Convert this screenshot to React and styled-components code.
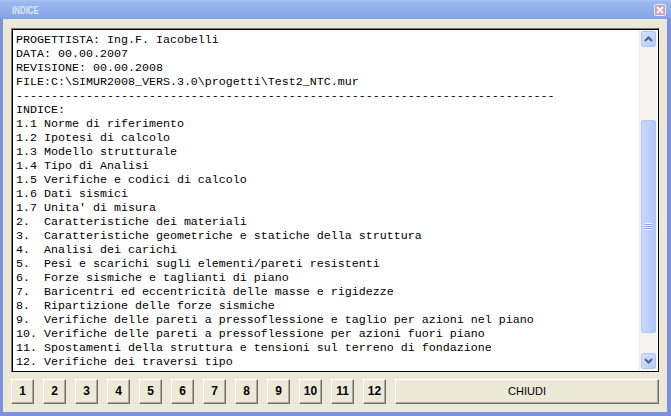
import React from 'react';
import styled, { createGlobalStyle } from 'styled-components';

const GlobalStyle = createGlobalStyle`
    html, body {
        margin: 0;
        padding: 0;
        background: #ece9d8;
    }
    #root {
        width: 671px;
        height: 416px;
    }
`;

const LINES = [
    'PROGETTISTA: Ing.F. Iacobelli',
    'DATA: 00.00.2007',
    'REVISIONE: 00.00.2008',
    'FILE:C:\\SIMUR2008_VERS.3.0\\progetti\\Test2_NTC.mur',
    '-'.repeat(77),
    'INDICE:',
    '1.1 Norme di riferimento',
    '1.2 Ipotesi di calcolo',
    '1.3 Modello strutturale',
    '1.4 Tipo di Analisi',
    '1.5 Verifiche e codici di calcolo',
    '1.6 Dati sismici',
    "1.7 Unita' di misura",
    '2.  Caratteristiche dei materiali',
    '3.  Caratteristiche geometriche e statiche della struttura',
    '4.  Analisi dei carichi',
    '5.  Pesi e scarichi sugli elementi/pareti resistenti',
    '6.  Forze sismiche e taglianti di piano',
    '7.  Baricentri ed eccentricità delle masse e rigidezze',
    '8.  Ripartizione delle forze sismiche',
    '9.  Verifiche delle pareti a pressoflessione e taglio per azioni nel piano',
    '10. Verifiche delle pareti a pressoflessione per azioni fuori piano',
    '11. Spostamenti della struttura e tensioni sul terreno di fondazione',
    '12. Verifiche dei traversi tipo',
];

const SECTIONS = ['1', '2', '3', '4', '5', '6', '7', '8', '9', '10', '11', '12'];

function Chevron({ up }) {
    return (
        <svg width="9" height="6" viewBox="0 0 9 6">
            <path
                d={up ? 'M1 5 L4.5 1.5 L8 5' : 'M1 1 L4.5 4.5 L8 1'}
                fill="none"
                stroke="#4d6185"
                strokeWidth="2"
            />
        </svg>
    );
}

function App() {
    return (
        <Window>
            <GlobalStyle />
            <TitleBar>
                <Title>INDICE</Title>
                <CloseButton>
                    <svg width="8" height="8" viewBox="0 0 8 8">
                        <path d="M1 1 L7 7 M7 1 L1 7" stroke="#fff" strokeWidth="1.8" />
                    </svg>
                </CloseButton>
            </TitleBar>

            <Frame>
                <TextBox>
                    <TextContent>{LINES.join('\n')}</TextContent>
                    <ScrollBar>
                        <ArrowButton><Chevron up /></ArrowButton>
                        <Track>
                            <Thumb>
                                <Grip />
                            </Thumb>
                        </Track>
                        <ArrowButton><Chevron /></ArrowButton>
                    </ScrollBar>
                </TextBox>

                <ButtonRow>
                    {SECTIONS.map((n) => (
                        <Button key={n} $small>{n}</Button>
                    ))}
                    <Button>CHIUDI</Button>
                </ButtonRow>
            </Frame>
        </Window>
    );
}

const Window = styled.div`
    width: 671px;
    height: 416px;
    display: flex;
    flex-direction: column;
    box-sizing: border-box;
    background: #ece9d8;
    overflow: hidden;
`;

const TitleBar = styled.div`
    height: 19px;
    flex: none;
    display: flex;
    align-items: center;
    justify-content: space-between;
    padding: 0 5px 0 12px;
    background: linear-gradient(180deg, #aac4f3 0%, #98b6ee 15%, #8fade9 55%, #8aa8e7 85%, #7f9ce2 100%);
`;

const Title = styled.span`
    font-family: "Liberation Sans", Arial, sans-serif;
    font-weight: bold;
    font-size: 11px;
    color: #dce6f9;
    display: inline-block;
    transform: scaleX(0.72);
    transform-origin: left center;
    margin-top: 1px;
`;

const CloseButton = styled.div`
    width: 12px;
    height: 12px;
    box-sizing: border-box;
    border: 1px solid #eee6f2;
    border-radius: 2px;
    background: #c9a0c4;
    display: flex;
    align-items: center;
    justify-content: center;
    margin-top: 1px;
`;

const Frame = styled.div`
    flex: 1;
    display: flex;
    flex-direction: column;
    border-style: solid;
    border-color: #7d92dd;
    border-width: 0 4px 4px 3px;
    padding: 9px 8px 8px 8px;
    gap: 7px;
    min-height: 0;
`;

const TextBox = styled.div`
    height: 344px;
    box-sizing: border-box;
    display: flex;
    background: #fff;
    border: 1px solid #000;
    border-top-color: #7b7a74;
    border-left-color: #7b7a74;
    box-shadow: inset 1px 1px 0 #000;
    padding: 1px 1px 1px 2px;
`;

const TextContent = styled.pre`
    flex: 1;
    margin: 0;
    padding: 3px 0 0 2px;
    font-family: "Liberation Mono", "Courier New", monospace;
    font-size: 11.67px;
    line-height: 14px;
    color: #000;
    white-space: pre;
    overflow: hidden;
`;

const ScrollBar = styled.div`
    width: 17px;
    display: flex;
    flex-direction: column;
    background: #f4f3ee;
    border-left: 1px solid #eeede5;
`;

const ArrowButton = styled.div`
    height: 16px;
    flex: none;
    margin: 1px;
    box-sizing: border-box;
    border: 1px solid #b3c6f2;
    border-radius: 2px;
    background: linear-gradient(135deg, #d6e2fd 0%, #c3d4fb 60%, #b4c8f6 100%);
    display: flex;
    align-items: center;
    justify-content: center;
`;

const Track = styled.div`
    flex: 1;
    padding-top: 72px;
    display: flex;
    flex-direction: column;
`;

const Thumb = styled.div`
    height: 213px;
    margin: 0 1px;
    box-sizing: border-box;
    border: 1px solid #b2c5f3;
    border-radius: 2px;
    background: linear-gradient(90deg, #c9d8fc 0%, #bccffa 60%, #b0c5f5 100%);
    display: flex;
    align-items: center;
    justify-content: center;
`;

const Grip = styled.div`
    width: 7px;
    height: 7px;
    background: repeating-linear-gradient(180deg, #eef3ff 0, #eef3ff 1px, #8ca5e4 1px, #8ca5e4 2px);
`;

const ButtonRow = styled.div`
    display: flex;
    gap: 9px;
    height: 25px;
`;

const Button = styled.div`
    width: ${(p) => (p.$small ? '23px' : 'auto')};
    flex: ${(p) => (p.$small ? 'none' : '1')};
    box-sizing: border-box;
    display: flex;
    align-items: center;
    justify-content: center;
    background: #ece9d8;
    border-top: 1px solid #fff;
    border-left: 1px solid #fff;
    border-right: 1px solid #716f64;
    border-bottom: 1px solid #716f64;
    box-shadow: inset -1px -1px 0 #aca899;
    font-family: "Liberation Sans", Arial, sans-serif;
    font-size: ${(p) => (p.$small ? '12px' : '11px')};
    font-weight: ${(p) => (p.$small ? 'bold' : 'normal')};
    color: #000;
    padding-bottom: 1px;
`;

export default App;
